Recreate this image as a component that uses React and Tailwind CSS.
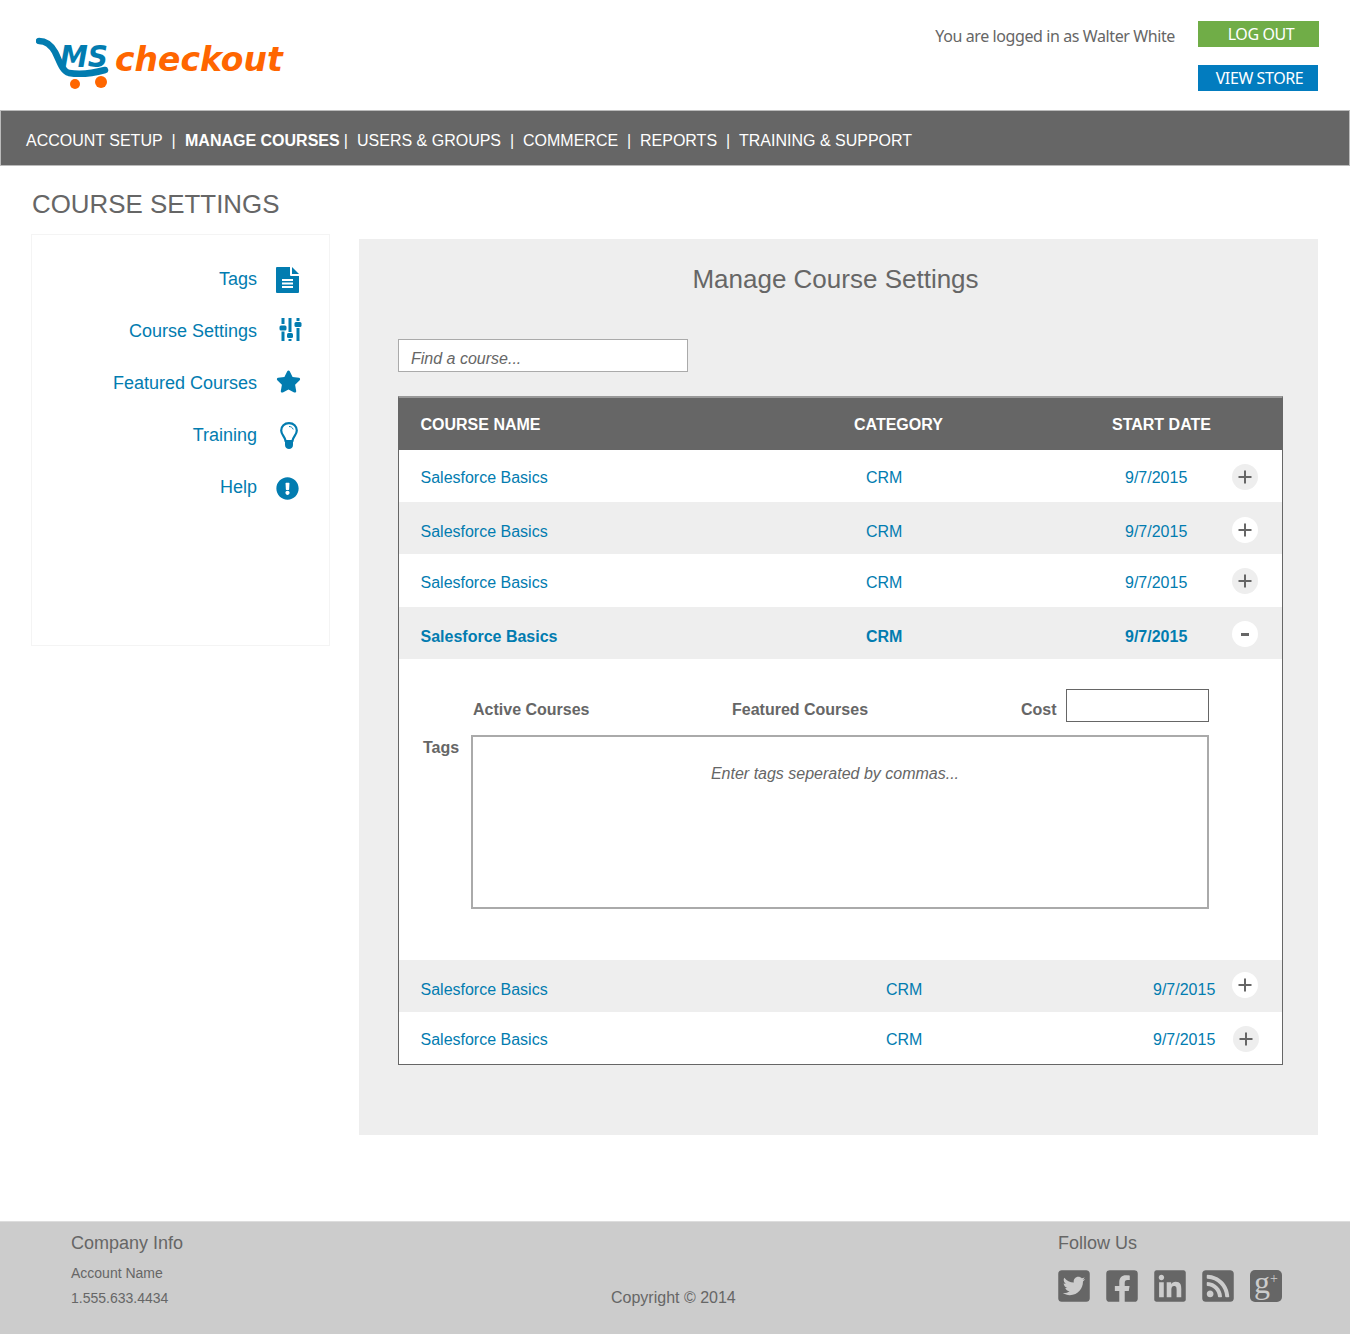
import React from "react";
import {
  FaStar,
  FaExclamationCircle,
  FaTwitterSquare,
  FaFacebookSquare,
  FaLinkedin,
  FaRssSquare,
} from "react-icons/fa";

const navItems = [
  { label: "ACCOUNT SETUP", w: "w-[159px]", gap: "ml-[9px]" },
  { label: "MANAGE COURSES", w: "w-[172px]", bold: true, gap: "ml-[4px]" },
  { label: "USERS & GROUPS", w: "w-[166px]", gap: "ml-[9px]" },
  { label: "COMMERCE", w: "w-[117px]", gap: "ml-[9px]" },
  { label: "REPORTS", w: "w-[99px]", gap: "ml-[9px]" },
  { label: "TRAINING & SUPPORT" },
];

const FileIcon = () => (
  <svg width="23" height="26" viewBox="0 0 23 26">
    <path d="M1 0H14V8a1 1 0 0 0 1 1H23V25a1 1 0 0 1-1 1H1a1 1 0 0 1-1-1V1a1 1 0 0 1 1-1Z" fill="#027cb0" />
    <path d="M16 0L23 7H16Z" fill="#027cb0" />
    <path d="M6 13H17M6 16.5H17M6 20H17" stroke="#fff" strokeWidth="1.8" />
  </svg>
);

const Sliders = () => (
  <svg width="23" height="23" viewBox="0 0 23 23" fill="#027cb0">
    <rect x="2.5" y="0" width="3" height="6" />
    <rect x="2.5" y="13.5" width="3" height="9.5" />
    <rect x="0.5" y="7.5" width="7" height="5" rx="1.5" />
    <rect x="9.5" y="0" width="3" height="14" />
    <rect x="9.5" y="21" width="3" height="2" />
    <rect x="8" y="15" width="6" height="5" rx="1.5" />
    <rect x="17.5" y="0" width="3" height="3" />
    <rect x="17.5" y="10" width="3" height="13" />
    <rect x="15.5" y="4" width="7" height="5" rx="1.5" />
  </svg>
);

const Bulb = () => (
  <svg width="18" height="27" viewBox="0 0 18 27" fill="none">
    <path
      d="M9 1.2C4.4 1.2 1.2 4.4 1.2 8.5C1.2 12.8 5 14.5 5.6 19H12.4C13 14.5 16.8 12.8 16.8 8.5C16.8 4.4 13.6 1.2 9 1.2Z"
      stroke="#027cb0"
      strokeWidth="2.2"
    />
    <path d="M9 4.5C11 4.5 12.6 5.6 13.2 7.4" stroke="#027cb0" strokeWidth="1" />
    <path d="M5 18H13V23C13 25.5 11 27 9 27C7 27 5 25.5 5 23Z" fill="#027cb0" />
  </svg>
);

const sideItems = [
  { label: "Tags", icon: <FileIcon />, pos: "mt-[2px] pl-[1px]" },
  { label: "Course Settings", icon: <Sliders />, pos: "mb-[3px] pl-[4px]" },
  { label: "Featured Courses", icon: <FaStar size={25} />, pos: "mb-[4px] pl-[1px]" },
  { label: "Training", icon: <Bulb />, pos: "pl-[5px]" },
  { label: "Help", icon: <FaExclamationCircle size={23} />, pos: "mt-[3px] pl-[1px]" },
];

const Logo = () => (
  <svg width="74" height="56" viewBox="0 0 74 56" fill="none">
    <path
      d="M3 4C10 4 15 8 19 15C24 25 26 34 33 36C45 38 58 36 69 33"
      stroke="#027cb0"
      strokeWidth="6.5"
      strokeLinecap="round"
    />
    <text
      x="24"
      y="30"
      fill="#027cb0"
      fontFamily="'DejaVu Sans', sans-serif"
      fontWeight="bold"
      fontStyle="italic"
      fontSize="30"
      textLength="48"
      lengthAdjust="spacingAndGlyphs"
    >
      MS
    </text>
    <circle cx="39" cy="47" r="5" fill="#ff6600" />
    <circle cx="65" cy="45" r="6" fill="#ff6600" />
  </svg>
);

const Toggle = ({ open, light }) => (
  <div
    className={`w-[26px] h-[26px] rounded-full flex items-center justify-center ${
      light ? "bg-white" : "bg-[#eeeeee]"
    }`}
  >
    {open ? (
      <div className="w-[8px] h-[3px] bg-[#666]" />
    ) : (
      <svg width="14" height="14" viewBox="0 0 14 14">
        <path d="M7 0.5V13.5M0.5 7H13.5" stroke="#666" strokeWidth="2" />
      </svg>
    )}
  </div>
);

const Row = ({ grey, bold, open, h, textPt, btnPt, wide }) => (
  <div
    className={`flex items-start text-[16px] text-[#027cb0] ${h} ${grey ? "bg-[#eeeeee]" : "bg-white"} ${
      bold ? "font-bold" : ""
    }`}
  >
    <div className={`${wide ? "w-[487px]" : "w-[467px]"} pl-[21.5px] ${textPt}`}>Salesforce Basics</div>
    <div className={`${wide ? "w-[267px]" : "w-[259px]"} ${textPt}`}>CRM</div>
    <div className={`${wide ? "w-[79px]" : "w-[107px]"} ${textPt}`}>9/7/2015</div>
    <div className={btnPt}>
      <Toggle open={open} light={grey} />
    </div>
  </div>
);

export default function App() {
  return (
    <div className="w-[1350px] h-[1334px] bg-white flex flex-col font-['Liberation_Sans',Arial,sans-serif] text-[#666]">
      {/* Header */}
      <div className="h-[110px] flex justify-between">
        <div className="flex items-start pl-[36px] pt-[37px]">
          <Logo />
          <div className="ml-[5px] mt-[2px] text-[33px] leading-[42px] font-bold italic text-[#ff6600] font-['DejaVu_Sans',sans-serif]">
            checkout
          </div>
        </div>
        <div className="flex pt-[21px] pr-[31px]">
          <div className="font-['Noto_Sans',sans-serif] text-[16px] tracking-[-0.4px] leading-[30px] mr-[23px]">
            You are logged in as Walter White
          </div>
          <div className="flex flex-col w-[121px] font-['Noto_Sans',sans-serif] text-[16px] tracking-[-0.4px] text-white">
            <div className="h-[26px] w-[121px] pl-[5px] bg-[#70ad47] flex items-center justify-center leading-none">
              LOG OUT
            </div>
            <div className="h-[26px] w-[120px] pl-[3px] mt-[18px] bg-[#027cbf] flex items-center justify-center leading-none">
              VIEW STORE
            </div>
          </div>
        </div>
      </div>

      {/* Nav */}
      <div className="h-[56px] bg-[#666] border border-[#bbb] flex items-center pl-[25px] pt-[5px] text-[16px] text-white">
        {navItems.map((item) => (
          <div key={item.label} className={`flex whitespace-nowrap ${item.w || ""} ${item.bold ? "font-bold" : ""}`}>
            {item.label}
            {item.gap && <span className={`font-normal ${item.gap}`}>|</span>}
          </div>
        ))}
      </div>

      {/* Title */}
      <h1 className="pl-[32px] pt-[21px] pb-[1px] text-[25.9px] leading-[34px] text-[#666]">COURSE SETTINGS</h1>

      <div className="flex items-start pl-[31px] pt-[12px]">
        {/* Sidebar */}
        <div className="w-[299px] h-[412px] border border-[#f4f4f4] pt-[18px] text-[18px] text-[#027cb0]">
          {sideItems.map((item) => (
            <div key={item.label} className="h-[52px] flex items-center">
              <div className="w-[225px] text-right">{item.label}</div>
              <div className={`ml-[18px] w-[28px] ${item.pos}`}>{item.icon}</div>
            </div>
          ))}
        </div>

        {/* Main */}
        <div className="ml-[29px] mt-[5px] w-[959px] h-[896px] bg-[#eeeeee] pl-[39px] pt-[24px]">
          <h2 className="w-[875px] text-center text-[26px] leading-[32px]">Manage Course Settings</h2>
          <div className="mt-[44px] w-[290px] h-[33px] bg-white border border-[#aaa] pl-[12px] pt-[9px] text-[16px] leading-[20px] italic">
            Find a course...
          </div>

          <div className="mt-[24px] w-[885px] h-[669px] border border-[#666] border-t-2 border-t-[#999] bg-white">
            <div className="h-[52px] bg-[#666] flex items-center pt-[2px] text-[16px] font-bold text-white">
              <div className="w-[455px] pl-[21.5px]">COURSE NAME</div>
              <div className="w-[258px]">CATEGORY</div>
              <div>START DATE</div>
            </div>
            <Row h="h-[52px]" textPt="pt-[16px]" btnPt="pt-[14px]" />
            <Row grey h="h-[52px]" textPt="pt-[18px]" btnPt="pt-[15px]" />
            <Row h="h-[53px]" textPt="pt-[17px]" btnPt="pt-[14px]" />
            <Row grey bold open h="h-[52px]" textPt="pt-[18px]" btnPt="pt-[14px]" />

            {/* Expanded details */}
            <div className="h-[301px] pt-[30px] font-bold text-[16px]">
              <div className="flex items-start">
                <div className="ml-[74px] w-[259px] pt-[9px]">Active Courses</div>
                <div className="w-[289px] pt-[9px]">Featured Courses</div>
                <div className="pt-[9px]">Cost</div>
                <div className="ml-[9px] w-[143px] h-[33px] border border-[#666]" />
              </div>
              <div className="flex items-start mt-[13px]">
                <div className="ml-[24px] w-[48px] pt-[1px]">Tags</div>
                <div className="w-[738px] h-[174px] border-2 border-[#aaa] pt-[25px] text-center font-normal italic">
                  <span className="mr-[10px]">Enter tags seperated by commas...</span>
                </div>
              </div>
            </div>

            <Row grey wide h="h-[52px]" textPt="pt-[18px]" btnPt="pt-[12px]" />
            <Row wide h="h-[52px]" textPt="pt-[16px]" btnPt="pt-[14px] pl-[1px]" />
          </div>
        </div>
      </div>

      {/* Footer */}
      <div className="mt-auto h-[113px] bg-[#cccccc] border-t border-[#ddd] flex items-start">
        <div className="w-[540px] pl-[71px] pt-[11px]">
          <div className="text-[18px] leading-[21px]">Company Info</div>
          <div className="mt-[10px] text-[14px] leading-[18px]">Account Name</div>
          <div className="mt-[7px] text-[14px] leading-[18px]">1.555.633.4434</div>
        </div>
        <div className="w-[518px] pt-[66px] pl-[71px] text-[16px] leading-[19px]">Copyright © 2014</div>
        <div className="pt-[11px]">
          <div className="text-[18px] leading-[21px]">Follow Us</div>
          <div className="mt-[14px] flex items-center gap-[16px]">
            <FaTwitterSquare className="w-[32px] h-[36px]" />
            <FaFacebookSquare className="w-[32px] h-[36px]" />
            <FaLinkedin className="w-[32px] h-[36px]" />
            <FaRssSquare className="w-[32px] h-[36px]" />
            <div className="w-[32px] h-[32px] rounded-[5px] bg-[#666] flex items-center justify-center text-[#ccc] font-['Liberation_Serif',serif] text-[32px] leading-none pb-[8px]">
              g<span className="text-[14px] mb-[6px]">+</span>
            </div>
          </div>
        </div>
      </div>
    </div>
  );
}
